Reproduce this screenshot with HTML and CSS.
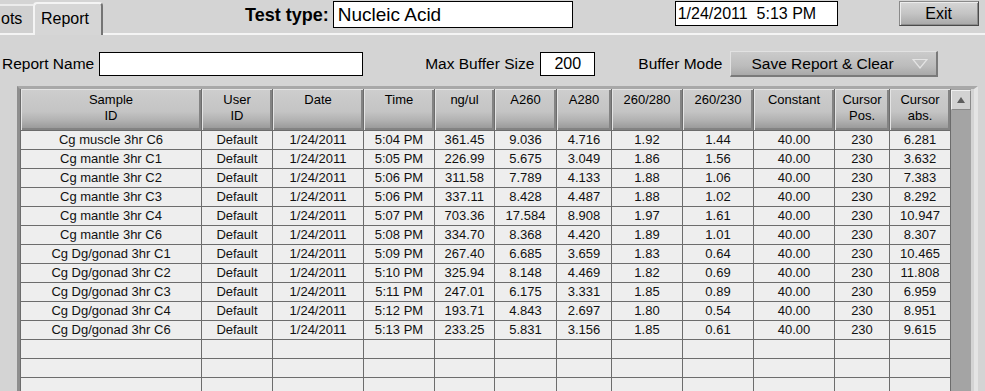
FILE: index.html
```html
<!DOCTYPE html>
<html lang="en">
<head>
    <meta charset="UTF-8">
    <title>Report</title>
    <link rel="stylesheet" href="styles.css">
</head>
<body>
<div class="top">
    <div class="tabs">
        <div class="tab tab--off">ots</div>
        <div class="tab tab--on">Report</div>
    </div>
    <label class="test-label">Test type:</label>
    <div class="test-box">Nucleic Acid</div>
    <div class="date-box">1/24/2011  5:13 PM</div>
    <button class="exit">Exit</button>
</div>

<div class="opts">
    <label class="lbl lbl--name">Report Name</label>
    <input class="field field--name" type="text" value="">
    <label class="lbl lbl--max">Max Buffer Size</label>
    <input class="field field--max" type="text" value="200">
    <label class="lbl lbl--mode">Buffer Mode</label>
    <div class="ring">
        <span>Save Report &amp; Clear</span>
        <svg width="16" height="11" viewBox="0 0 16 11"><path d="M1 1.5 H15 L8 10 Z" fill="none" stroke="#e4e4e4" stroke-width="1.2"/></svg>
    </div>
</div>

<div class="frame">
    <div class="grid" id="grid">
        <div class="th">Sample<br>ID</div>
        <div class="th">User<br>ID</div>
        <div class="th">Date</div>
        <div class="th">Time</div>
        <div class="th">ng/ul</div>
        <div class="th">A260</div>
        <div class="th">A280</div>
        <div class="th">260/280</div>
        <div class="th">260/230</div>
        <div class="th">Constant</div>
        <div class="th">Cursor<br>Pos.</div>
        <div class="th">Cursor<br>abs.</div>
    </div>
    <div class="vscroll">
        <div class="vscroll__up">
            <svg width="10" height="8" viewBox="0 0 10 8"><path d="M5 1 L9 7 H1 Z" fill="#5e5e5e"/></svg>
        </div>
    </div>
</div>

<script>
    (function() {
        var rows = [
            ['Cg muscle 3hr C6', '5:04 PM', '361.45', '9.036', '4.716', '1.92', '1.44', '6.281'],
            ['Cg mantle 3hr C1', '5:05 PM', '226.99', '5.675', '3.049', '1.86', '1.56', '3.632'],
            ['Cg mantle 3hr C2', '5:06 PM', '311.58', '7.789', '4.133', '1.88', '1.06', '7.383'],
            ['Cg mantle 3hr C3', '5:06 PM', '337.11', '8.428', '4.487', '1.88', '1.02', '8.292'],
            ['Cg mantle 3hr C4', '5:07 PM', '703.36', '17.584', '8.908', '1.97', '1.61', '10.947'],
            ['Cg mantle 3hr C6', '5:08 PM', '334.70', '8.368', '4.420', '1.89', '1.01', '8.307'],
            ['Cg Dg/gonad 3hr C1', '5:09 PM', '267.40', '6.685', '3.659', '1.83', '0.64', '10.465'],
            ['Cg Dg/gonad 3hr C2', '5:10 PM', '325.94', '8.148', '4.469', '1.82', '0.69', '11.808'],
            ['Cg Dg/gonad 3hr C3', '5:11 PM', '247.01', '6.175', '3.331', '1.85', '0.89', '6.959'],
            ['Cg Dg/gonad 3hr C4', '5:12 PM', '193.71', '4.843', '2.697', '1.80', '0.54', '8.951'],
            ['Cg Dg/gonad 3hr C6', '5:13 PM', '233.25', '5.831', '3.156', '1.85', '0.61', '9.615'],
        ];
        var html = '';
        rows.forEach(function(r) {
            var cells = [r[0], 'Default', '1/24/2011', r[1], r[2], r[3], r[4], r[5], r[6], '40.00', '230', r[7]];
            cells.forEach(function(c) {
                html += '<div class="td">' + c + '</div>';
            });
        });
        for (var i = 0; i < 3; ++i) {
            for (var c = 0; c < 12; ++c) {
                html += '<div class="td"></div>';
            }
        }
        document.getElementById('grid').insertAdjacentHTML('beforeend', html);
    })();
</script>
</body>
</html>
```

FILE: styles.css
```css
html, body {
    margin: 0;
    padding: 0;
    overflow: hidden;
}
body {
    width: 985px;
    height: 391px;
    background: #d4d4d4;
    font-family: "Liberation Sans", Arial, sans-serif;
    color: #000;
}

/* top bar */
.top {
    display: flex;
    align-items: flex-start;
    height: 33px;
    border-bottom: 2px solid #f4f4f4;
}
.tabs {
    display: flex;
    align-items: flex-end;
    align-self: stretch;
}
.tab {
    box-sizing: border-box;
    font-size: 16px;
    line-height: 26px;
}
.tab--off {
    width: 33px;
    height: 29px;
    padding-left: 1px;
    border-top: 2px solid #ececec;
    background: #d0d0d0;
}
.tab--on {
    position: relative;
    width: 70px;
    height: 33px;
    margin-bottom: -2px;
    padding: 2px 0 0 6px;
    border-top: 2px solid #f4f4f4;
    border-left: 2px solid #f4f4f4;
    border-right: 2px solid #747474;
    border-radius: 4px 4px 0 0;
    background: #d6d6d6;
}

.test-label {
    margin: 5px 0 0 142px;
    font-size: 18px;
    font-weight: bold;
}
.test-box {
    box-sizing: border-box;
    width: 240px;
    height: 27px;
    margin: 1px 0 0 4px;
    padding-left: 4px;
    border: 1px solid #000;
    background: #fff;
    font-size: 19px;
    line-height: 25px;
}
.date-box {
    box-sizing: border-box;
    width: 163px;
    height: 25px;
    margin: 1px 0 0 102px;
    padding-left: 2px;
    border: 1px solid #000;
    background: #fff;
    font-size: 16px;
    line-height: 23px;
    white-space: pre;
}
.exit {
    box-sizing: border-box;
    width: 80px;
    height: 25px;
    margin: 1px 0 0 61px;
    padding: 0;
    border: 1px solid #4a4a4a;
    border-top-color: #8a8a8a;
    border-left-color: #8a8a8a;
    background: linear-gradient(#d6d6d6, #c4c4c4 50%, #a8a8a8);
    box-shadow: inset 1px 1px 0 #ececec, inset -1px -1px 0 #8c8c8c;
    font-family: "Liberation Sans", Arial, sans-serif;
    font-size: 16px;
    color: #000;
}

/* options row */
.opts {
    display: flex;
    align-items: center;
    height: 26px;
    margin-top: 16px;
}
.lbl {
    font-size: 15.5px;
}
.lbl--name {
    margin-left: 2px;
}
.lbl--max {
    margin-left: 62px;
}
.lbl--mode {
    margin-left: 43px;
}
.field {
    box-sizing: border-box;
    height: 24px;
    margin-left: 5px;
    padding: 0;
    border: 1px solid #000;
    background: #fff;
    font-family: "Liberation Sans", Arial, sans-serif;
    font-size: 16px;
    text-align: center;
}
.field--name {
    width: 264px;
}
.field--max {
    width: 55px;
    margin-left: 6px;
}
.ring {
    box-sizing: border-box;
    display: flex;
    align-items: center;
    justify-content: space-between;
    width: 208px;
    height: 26px;
    margin-left: 8px;
    padding: 0 8px 0 20px;
    border-right: 2px solid #7a7a7a;
    border-bottom: 2px solid #7a7a7a;
    border-top: 1px solid #e2e2e2;
    border-left: 1px solid #e2e2e2;
    background: linear-gradient(#cbcbcb, #bcbcbc 60%, #a9a9a9);
    font-size: 15.5px;
}

/* table */
.frame {
    display: flex;
    width: 954px;
    margin: 9px 0 0 17px;
    border-top: 3px solid #a8a8a8;
    border-left: 3px solid #8e8e8e;
    border-right: 4px solid #e4e4e4;
}
.grid {
    display: grid;
    grid-template-columns: 180px 70px 90px 70px 59px 61px 54px 70px 70px 80px 54px 60px;
    grid-template-rows: 41px;
    grid-auto-rows: 18px;
    gap: 1px;
    padding: 0 1px;
    background: #6c6c6c;
}
.th {
    box-sizing: border-box;
    padding-top: 3px;
    background: linear-gradient(#cecece, #c4c4c4 55%, #b2b2b2 76%, #959595);
    box-shadow: inset 1px 1px 0 #e4e4e4, inset -2px -2px 0 #838383;
    font-size: 13px;
    line-height: 16px;
    text-align: center;
}
.td {
    background: #eeeeee;
    font-size: 13px;
    line-height: 18px;
    text-align: center;
    color: #111;
}
.vscroll {
    width: 20px;
    background: #a4a4a4;
}
.vscroll__up {
    box-sizing: border-box;
    display: flex;
    align-items: center;
    justify-content: center;
    width: 20px;
    height: 20px;
    margin-top: 1px;
    border: 1px solid #8a8a8a;
    border-top-color: #f0f0f0;
    border-left-color: #f0f0f0;
    background: #d2d2d2;
}
```
